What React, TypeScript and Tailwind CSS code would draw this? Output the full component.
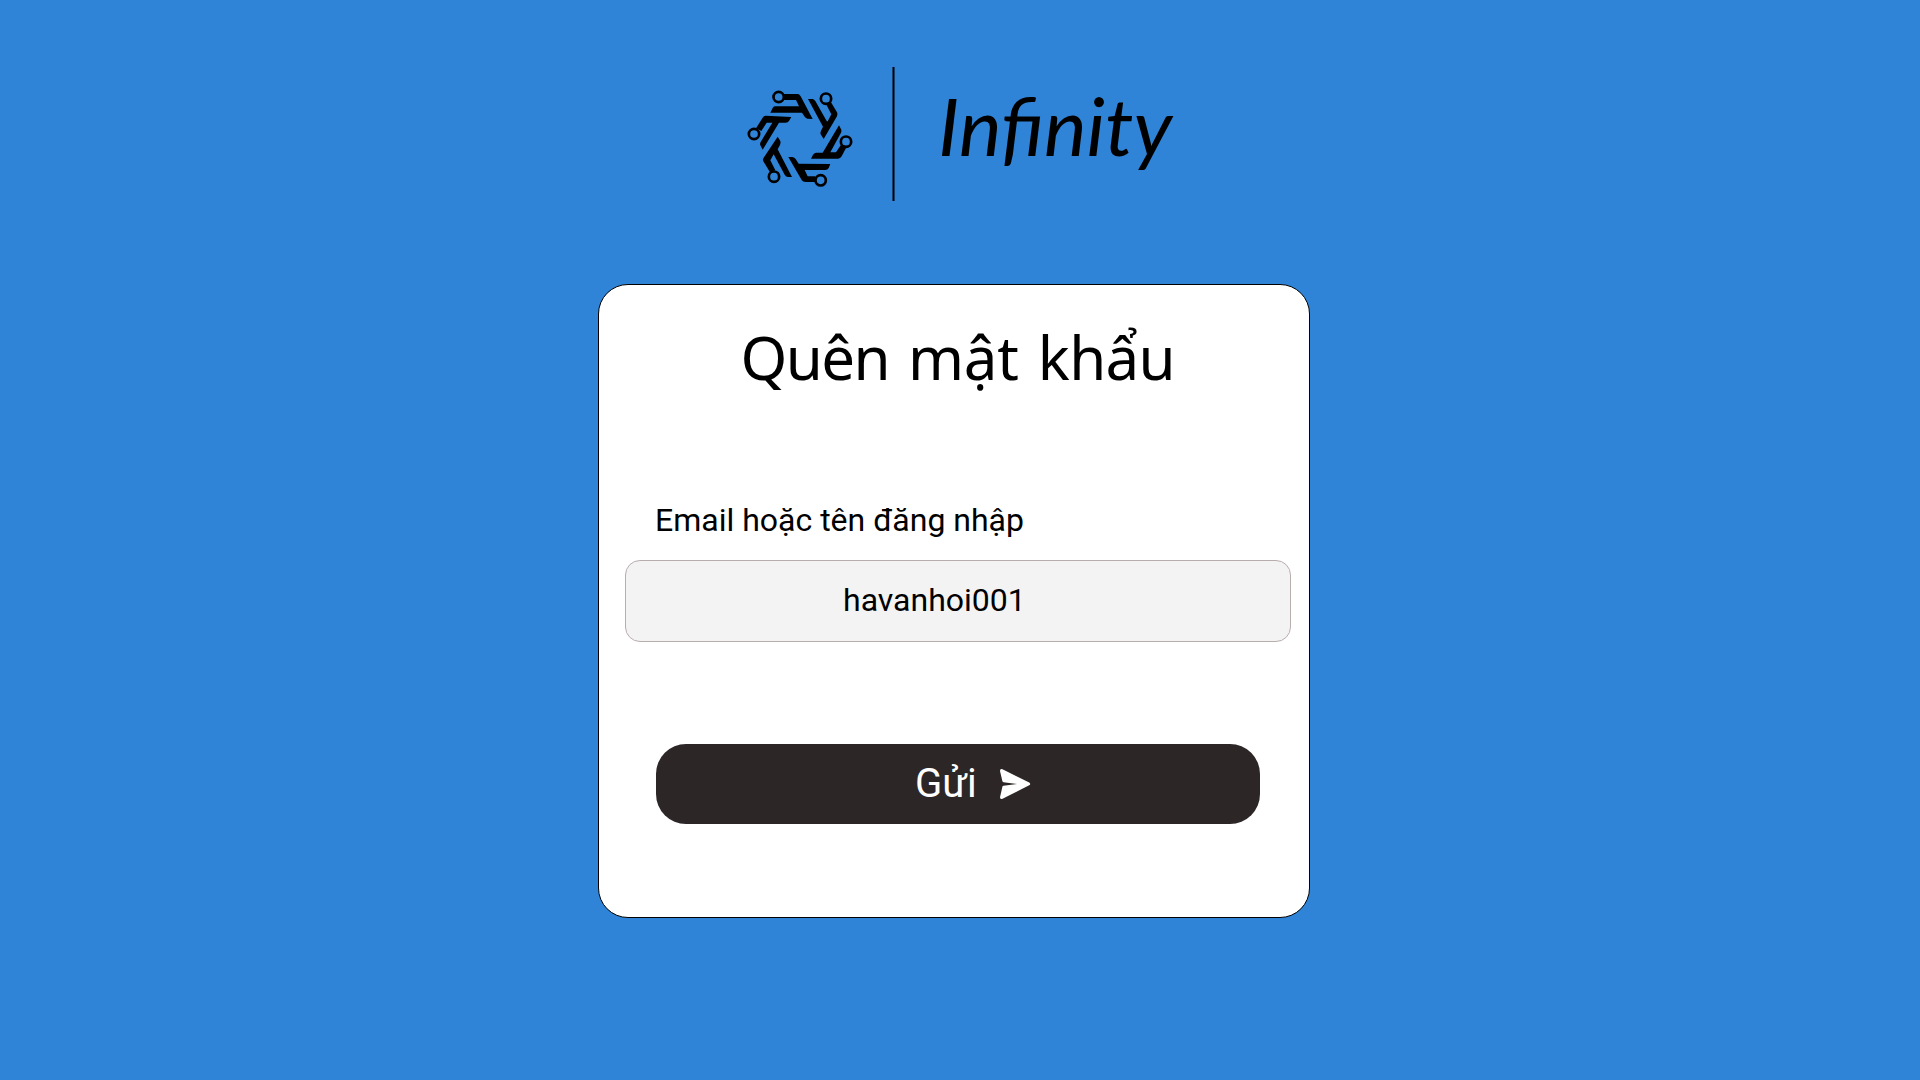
function Emblem() {
  return (
    <svg className="mt-[75px] h-[125px] w-[130px] shrink-0" viewBox="0 0 390 375" fill="black">
      <g fill="none" stroke="black" strokeWidth="8">
        <circle cx="131" cy="66" r="15.5" />
        <circle cx="273" cy="71" r="15.5" />
        <circle cx="333" cy="200" r="15.5" />
        <circle cx="257" cy="316" r="15.5" />
        <circle cx="117" cy="305" r="15.5" />
        <circle cx="57" cy="177" r="15.5" />
      </g>
      <path d="M147 57H189Q194 58 197 64L233 132L217 131Q211 130 208 124L201 113H106L113 99Q115 95 120 94H192L183 75H147Z" />
      <path d="M219 72H233Q238 73 241 78L275 138Q277 141 279 137L289 118L275 91L288 82L306 112Q309 118 306 124L266 192L257 178Q255 173 258 167L264 155Z" />
      <path d="M312 151L319 164Q320 168 318 173L286 232H303L319 208L335 215L320 244Q316 251 309 251H228L234 239Q237 234 243 233H263Z" />
      <path d="M160 246H172Q179 247 182 252L191 266L286 267L281 279Q278 285 271 285H209L218 304H241V321H212Q203 321 200 315Z" />
      <path d="M128 185L136 198Q138 203 135 210L128 223L171 306H158Q152 305 149 299L116 238L106 256L121 286L105 292L85 259Q82 254 86 248Z" />
      <path d="M92 122L169 126L162 138Q159 143 152 143H132L83 224L76 211Q74 206 77 201L112 143H95L79 168L63 160L83 128Q86 122 92 122Z" />
    </svg>
  );
}

function SendIcon() {
  return (
    <svg className="ml-[22px] h-[32px] w-[32px]" viewBox="0 0 32 32" fill="white">
      <path d="M1 3Q1 .3 3.5 1.3L30.2 14.6Q32.2 16 30.2 17.2L3.5 30.8Q1 31.8 1 29.3L3.4 18.8Q3.6 18 4.5 17.8L18 16L4.5 14.2Q3.6 14 3.4 13.3Z" />
    </svg>
  );
}

export default function App() {
  return (
    <main className="h-[1080px] w-[1920px] overflow-hidden bg-[#2f84d8] text-black">
      <header className="flex h-[284px] items-start pl-[735px]">
        <Emblem />
        <div className="mt-[67px] ml-[27px] h-[134px] w-[3px] shrink-0 border-x border-[#183f68] bg-black" />
        <div className="mt-[77px] ml-[43px] font-['Lato',sans-serif] text-[80.5px] leading-[96px] italic">Infinity</div>
      </header>
      <section className="ml-[598px] flex h-[634px] w-[712px] flex-col rounded-[30px] border border-black bg-white">
        <h1 className="mt-[31px] ml-[141.5px] flex h-[82px] gap-[19px] font-['Noto_Sans',sans-serif] text-[60px] leading-[82px] whitespace-nowrap">
          <span className="tracking-[-1.6px]">Quên</span>
          <span className="tracking-[-0.2px]">mật</span>
          <span className="tracking-[-0.7px]">khẩu</span>
        </h1>
        <label className="mt-[103px] ml-[56px] font-['Roboto',sans-serif] text-[32px] leading-[38px]">
          Email hoặc tên đăng nhập
        </label>
        <div className="mt-[21px] ml-[26px] flex h-[82px] w-[666px] items-center rounded-[15px] border border-[#b8adad] bg-[#f3f3f3] pl-[217px] font-['Roboto',sans-serif] text-[32px] leading-[38px]">
          <span className="-mt-[2px]">havanhoi001</span>
        </div>
        <button className="mt-[102px] ml-[57px] flex h-[80px] w-[604px] items-center rounded-[30px] bg-[#2d2627] pl-[259px] font-['Roboto',sans-serif] text-[40px] leading-[48px] text-white">
          Gửi
          <SendIcon />
        </button>
      </section>
    </main>
  );
}
